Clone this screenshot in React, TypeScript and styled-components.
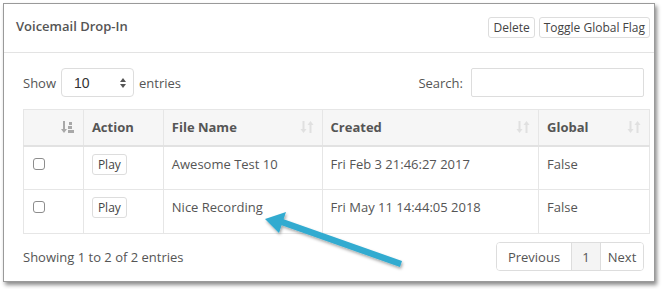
import React from 'react';
import styled, { createGlobalStyle } from 'styled-components';

const Global = createGlobalStyle`
  html, body { margin: 0; padding: 0; background: #fff; }
  body { font-family: "Open Sans", "Liberation Sans", sans-serif; font-size: 13px; color: #555; }
  * { box-sizing: border-box; }
`;

const Stage = styled.div`
  position: relative;
  width: 671px;
  height: 289px;
  padding: 3px 0 0 3px;
`;

const Panel = styled.section`
  width: 652px;
  height: 279px;
  background: #fff;
  border: 1px solid #9a9a9a;
  box-shadow: 2px 3px 4px rgba(0, 0, 0, 0.45);
  display: flex;
  flex-direction: column;
`;

const Header = styled.header`
  height: 49px;
  border-bottom: 1px solid #e3e3e3;
  display: flex;
  align-items: center;
  justify-content: space-between;
  padding: 0 4px 5px 12px;
`;

const Title = styled.h3`
  margin: 0;
  font-size: 13px;
  font-weight: 600;
  color: #555;
`;

const Tools = styled.div`
  display: flex;
  gap: 4px;
  margin-top: 4px;
`;

const Btn = styled.button`
  font-family: inherit;
  font-size: 12px;
  color: #444;
  background: #fff;
  border: 1px solid #ddd;
  border-radius: 3px;
  padding: 0 4px;
  height: 21px;
  line-height: 19px;
  cursor: pointer;
`;

const Body = styled.div`
  padding: 15px 10px 0 19px;
  display: flex;
  flex-direction: column;
`;

const Controls = styled.div`
  display: flex;
  justify-content: space-between;
  align-items: center;
  height: 29px;
  margin-bottom: 12px;
  padding-right: 0;
`;

const Label = styled.label`
  display: flex;
  align-items: center;
  gap: 5px;
  font-size: 13px;
  color: #555;
`;

const SelectBox = styled.div`
  width: 73px;
  height: 29px;
  border: 1px solid #ddd;
  border-radius: 4px;
  display: flex;
  align-items: center;
  justify-content: space-between;
  padding: 0 6px 0 12px;
  font-family: "Liberation Sans", Arial, sans-serif;
  font-size: 14px;
  color: #333;
`;

const SearchInput = styled.input`
  width: 173px;
  height: 29px;
  border: 1px solid #ddd;
  border-radius: 2px;
  margin-left: 3px;
`;

const Table = styled.table`
  width: 627px;
  border-collapse: collapse;
  border: 1px solid #e6e6e6;
`;

const Th = styled.th<{ $w: number }>`
  width: ${p => p.$w}px;
  height: 36px;
  background: #f6f6f6;
  border: 1px solid #e6e6e6;
  border-bottom: 2px solid #e2e2e2;
  text-align: left;
  padding: 0 8px;
  font-weight: 700;
  font-size: 13px;
  color: #555;
`;

const ThInner = styled.div<{ $end?: boolean }>`
  display: flex;
  align-items: center;
  justify-content: ${p => (p.$end ? 'flex-end' : 'space-between')};
`;

const Td = styled.td`
  height: 44px;
  border: 1px solid #e6e6e6;
  padding: 8px 8px 0;
  vertical-align: top;
  font-size: 13px;
  color: #555;
`;

const Check = styled.span`
  display: inline-block;
  width: 12px;
  height: 12px;
  border: 1px solid #8d8d8d;
  border-radius: 3px;
  margin: 3px 0 0 1px;
  background: #fff;
`;

const PlayBtn = styled(Btn)`
  font-size: 12px;
  padding: 0 5px;
  margin-top: -1px;
`;

const Footer = styled.div`
  display: flex;
  justify-content: space-between;
  align-items: center;
  margin-top: 8px;
  padding-right: 0;
`;

const Pager = styled.div`
  display: flex;
  border: 1px solid #ddd;
  border-radius: 4px;
  height: 29px;
  overflow: hidden;
`;

const PageItem = styled.span<{ $active?: boolean; $w: number }>`
  width: ${p => p.$w}px;
  display: flex;
  align-items: center;
  justify-content: center;
  font-size: 13px;
  color: #555;
  background: ${p => (p.$active ? '#f4f4f4' : '#fff')};
  & + & { border-left: 1px solid #ddd; }
`;

const Arrow = styled.svg`
  position: absolute;
  left: 0;
  top: 0;
  pointer-events: none;
`;

const SortIcon = () => (
  <svg width="14" height="14" viewBox="0 0 14 14">
    <g fill="#e0e0e0">
      <rect x="2.5" y="1" width="2" height="9" />
      <path d="M0.5 9 L6.5 9 L3.5 13 Z" />
      <rect x="9.5" y="4" width="2" height="9" />
      <path d="M7.5 5 L13.5 5 L10.5 1 Z" />
    </g>
  </svg>
);

const SortActive = () => (
  <svg width="14" height="14" viewBox="0 0 14 14">
    <g fill="#a8a8a8">
      <rect x="2" y="1" width="2" height="9" />
      <path d="M0 9 L6 9 L3 13 Z" />
      <rect x="8" y="2" width="3" height="3" />
      <rect x="7" y="6" width="4" height="3" />
      <rect x="7" y="10" width="6" height="3" />
    </g>
  </svg>
);

const Spinner = () => (
  <svg width="8" height="12" viewBox="0 0 8 12">
    <path d="M4 1 L7 5 L1 5 Z" fill="#555" />
    <path d="M4 11 L7 7 L1 7 Z" fill="#555" />
  </svg>
);

const rows = [
  { name: 'Awesome Test 10', created: 'Fri Feb 3 21:46:27 2017', global: 'False' },
  { name: 'Nice Recording', created: 'Fri May 11 14:44:05 2018', global: 'False' },
];

export default function App() {
  return (
    <Stage>
      <Global />
      <Panel>
        <Header>
          <Title>Voicemail Drop-In</Title>
          <Tools>
            <Btn>Delete</Btn>
            <Btn>Toggle Global Flag</Btn>
          </Tools>
        </Header>
        <Body>
          <Controls>
            <Label>
              Show
              <SelectBox>
                10
                <Spinner />
              </SelectBox>
              entries
            </Label>
            <Label>
              Search:
              <SearchInput />
            </Label>
          </Controls>
          <Table>
            <thead>
              <tr>
                <Th $w={60}>
                  <ThInner $end>
                    <SortActive />
                  </ThInner>
                </Th>
                <Th $w={80}>Action</Th>
                <Th $w={159}>
                  <ThInner>
                    File Name <SortIcon />
                  </ThInner>
                </Th>
                <Th $w={217}>
                  <ThInner>
                    Created <SortIcon />
                  </ThInner>
                </Th>
                <Th $w={111}>
                  <ThInner>
                    Global <SortIcon />
                  </ThInner>
                </Th>
              </tr>
            </thead>
            <tbody>
              {rows.map(r => (
                <tr key={r.name}>
                  <Td>
                    <Check />
                  </Td>
                  <Td>
                    <PlayBtn>Play</PlayBtn>
                  </Td>
                  <Td>{r.name}</Td>
                  <Td>{r.created}</Td>
                  <Td>{r.global}</Td>
                </tr>
              ))}
            </tbody>
          </Table>
          <Footer>
            <span>Showing 1 to 2 of 2 entries</span>
            <Pager>
              <PageItem $w={74}>Previous</PageItem>
              <PageItem $w={29} $active>1</PageItem>
              <PageItem $w={43}>Next</PageItem>
            </Pager>
          </Footer>
        </Body>
      </Panel>
      <Arrow width="671" height="289" viewBox="0 0 671 289">
        <defs>
          <filter id="sh" x="-20%" y="-20%" width="140%" height="140%">
            <feDropShadow dx="1" dy="2" stdDeviation="1.5" floodColor="#000" floodOpacity="0.35" />
          </filter>
        </defs>
        <g filter="url(#sh)" fill="#33abd0">
          <path d="M400 267 L281 225 L283 219 L402 261 Z" />
          <path d="M265 219 L286 212 L279 233 Z" />
        </g>
      </Arrow>
    </Stage>
  );
}
